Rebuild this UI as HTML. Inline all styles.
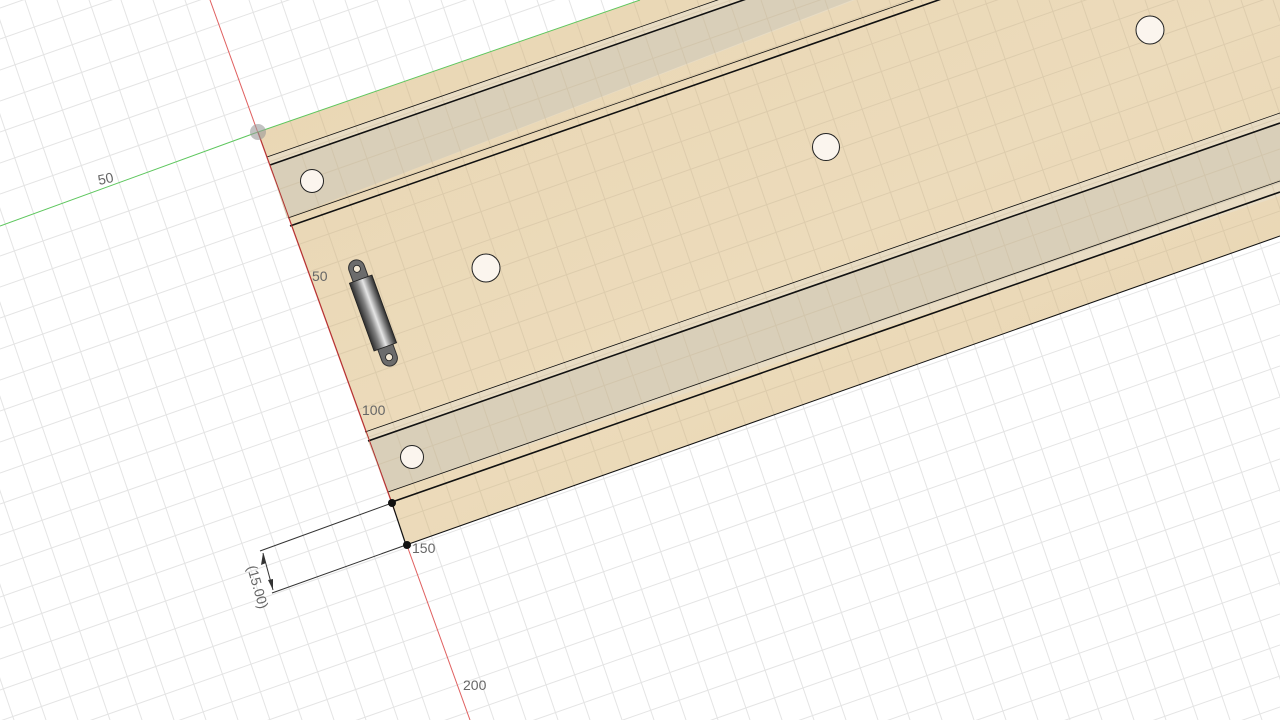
<!DOCTYPE html>
<html><head><meta charset="utf-8"><style>
html,body{margin:0;padding:0;background:#fff;width:1280px;height:720px;overflow:hidden}
svg{display:block;overflow:hidden}
text{font-family:"Liberation Sans",sans-serif;fill:#666;font-size:14px}
</style></head><body>
<svg width="1280" height="720" viewBox="0 0 1280 720" xmlns="http://www.w3.org/2000/svg">
<defs>
<g id="grid" fill="none" stroke-width="1">
<path transform="translate(7,0)" d="M-430 0l245 720M-398 0l245 720M-366 0l245 720M-334 0l245 720M-302 0l245 720M-270 0l245 720M-238 0l245 720M-206 0l245 720M-174 0l245 720M-142 0l245 720M-110 0l245 720M-78 0l245 720M-46 0l245 720M-14 0l245 720M18 0l245 720M50 0l245 720M82 0l245 720M114 0l245 720M146 0l245 720M178 0l245 720M242 0l245 720M274 0l245 720M306 0l245 720M338 0l245 720M370 0l245 720M402 0l245 720M434 0l245 720M466 0l245 720M498 0l245 720M530 0l245 720M562 0l245 720M594 0l245 720M626 0l245 720M658 0l245 720M690 0l245 720M722 0l245 720M754 0l245 720M786 0l245 720M818 0l245 720M850 0l245 720M882 0l245 720M914 0l245 720M946 0l245 720M978 0l245 720M1010 0l245 720M1042 0l245 720M1074 0l245 720M1106 0l245 720M1138 0l245 720M1170 0l245 720M1202 0l245 720M1234 0l245 720M1266 0l245 720"/>
<path d="M0 8l1280 -448M0 39l1280 -448M0 70l1280 -448M0 101l1280 -448M0 132l1280 -448M0 163l1280 -448M0 194l1280 -448M0 256l1280 -448M0 287l1280 -448M0 318l1280 -448M0 349l1280 -448M0 380l1280 -448M0 411l1280 -448M0 442l1280 -448M0 473l1280 -448M0 504l1280 -448M0 535l1280 -448M0 566l1280 -448M0 597l1280 -448M0 628l1280 -448M0 659l1280 -448M0 690l1280 -448M0 721l1280 -448M0 752l1280 -448M0 783l1280 -448M0 814l1280 -448M0 845l1280 -448M0 876l1280 -448M0 907l1280 -448M0 938l1280 -448M0 969l1280 -448M0 1000l1280 -448M0 1031l1280 -448M0 1062l1280 -448M0 1093l1280 -448M0 1124l1280 -448M0 1155l1280 -448M0 1186l1280 -448"/>
</g>
<linearGradient id="bd" x1="0" y1="0" x2="1" y2="1">
<stop offset="0" stop-color="#e9d6b3"/><stop offset="0.5" stop-color="#ecdbbb"/><stop offset="1" stop-color="#e8d4b0"/>
</linearGradient>
<linearGradient id="mt" x1="0" y1="0" x2="1" y2="0">
<stop offset="0" stop-color="#2e2e2e"/><stop offset="0.3" stop-color="#808080"/><stop offset="0.55" stop-color="#e6e6e6"/><stop offset="0.8" stop-color="#7a7a7a"/><stop offset="1" stop-color="#2a2a2a"/>
</linearGradient>
<clipPath id="bc"><polygon points="258,132 640,0 1280,0 1280,236 406,545 392,503"/></clipPath>
<clipPath id="vp"><rect width="1280" height="720"/></clipPath>
</defs>
<g clip-path="url(#vp)">
<rect width="1280" height="720" fill="#fff"/>
<use href="#grid" stroke="#e4e4e4"/>
<line x1="210" y1="0" x2="470" y2="720" stroke="#e06060" stroke-width="1"/>
<line x1="258" y1="132" x2="0" y2="226" stroke="#5cc65c" stroke-width="1"/>
<polygon points="258,132 640,0 1280,0 1280,236 406,545 392,503" fill="url(#bd)"/>
<polygon points="267,157 1280,-196 1280,-163 287,218" fill="#e8dcc4"/>
<polygon points="270,165 1280,-187 1280,-165 287,218" fill="#d9cfb9"/>
<polygon points="365,432 1280,113 1280,196 388,492" fill="#e8dcc4"/>
<polygon points="368,441 1280,123 1280,183 388,492" fill="#d9cfb9"/>
<g clip-path="url(#bc)"><use href="#grid" stroke="#c9b89a" opacity="0.4"/></g>
<g stroke="#111" fill="none">
<line x1="267" y1="157" x2="1280" y2="-196" stroke-width="0.8"/>
<line x1="270" y1="165" x2="1280" y2="-187" stroke-width="1.6"/>
<line x1="288" y1="218" x2="1280" y2="-128" stroke-width="0.8"/>
<line x1="290" y1="226" x2="1280" y2="-119" stroke-width="1.6"/>
<line x1="365" y1="432" x2="1280" y2="113" stroke-width="0.8"/>
<line x1="368" y1="441" x2="1280" y2="123" stroke-width="1.6"/>
<line x1="388" y1="492" x2="1280" y2="181" stroke-width="0.8"/>
<line x1="392" y1="502" x2="1280" y2="192" stroke-width="1.6"/>
<line x1="406" y1="545" x2="1280" y2="236" stroke-width="1"/>
<line x1="392" y1="503" x2="406" y2="545" stroke-width="1.2"/>
</g>
<line x1="258" y1="132" x2="640" y2="0" stroke="#5cc65c" stroke-width="1"/>
<line x1="258" y1="132" x2="392" y2="503" stroke="#b03030" stroke-width="1"/>
<g fill="#fbf5ee" stroke="#222" stroke-width="1">
<circle cx="312" cy="181" r="11.5"/>
<circle cx="826" cy="147" r="13.5"/>
<circle cx="1150" cy="30" r="14"/>
<circle cx="486" cy="268" r="14"/>
<circle cx="412" cy="457" r="11.5"/>
</g>
<circle cx="258" cy="132" r="8" fill="#9a9a9a" opacity="0.6"/>
<g transform="translate(373,313) rotate(-20)">
<rect x="-8" y="-56" width="16" height="112" rx="8" fill="#6c6c6c" stroke="#333" stroke-width="1"/>
<circle cx="0" cy="-47" r="3.5" fill="#f3e8d3" stroke="#222" stroke-width="0.8"/>
<circle cx="0" cy="47" r="3.5" fill="#f3e8d3" stroke="#222" stroke-width="0.8"/>
<rect x="-12" y="-36" width="24" height="72" fill="url(#mt)" stroke="#222" stroke-width="0.8"/>
</g>
<g stroke="#333" stroke-width="1" fill="none">
<line x1="392" y1="503" x2="260" y2="551"/>
<line x1="406" y1="545" x2="272" y2="593"/>
<line x1="263" y1="553" x2="273" y2="590"/>
</g>
<polygon points="263,553 261,565 266,563" fill="#333"/>
<polygon points="273,590 268,580 273,579" fill="#333"/>
<circle cx="392" cy="503" r="4" fill="#111"/>
<circle cx="407" cy="545" r="4" fill="#111"/>
<text transform="translate(247,567) rotate(74)" font-size="14">(15.00)</text>
<text x="99" y="185" transform="rotate(-12 99 185)">50</text>
<text x="312" y="281">50</text>
<text x="362" y="415">100</text>
<text x="412" y="553">150</text>
<text x="463" y="690">200</text>
</g>
</svg>
</body></html>
